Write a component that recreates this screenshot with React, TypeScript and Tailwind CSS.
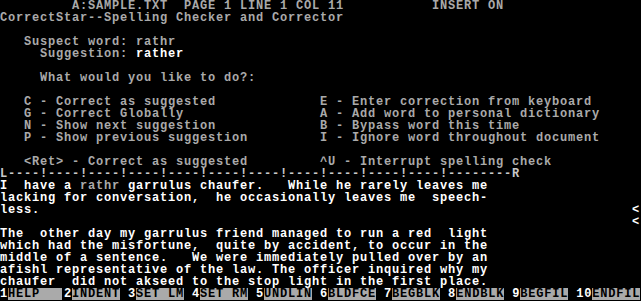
import type { ReactNode } from 'react'

// pantalla de texto de 80x25: cada celda mide 8x12 px
const GRIS = 'text-[#aaaaaa]'
const BLANCO = 'text-white'

function Fila({ children, className = '' }: { children?: ReactNode; className?: string }) {
  return <div className={`h-[12px] whitespace-pre ${className}`}>{children}</div>
}

// dos columnas de opciones, la derecha empieza en la columna 40
const OPCIONES = [
  ['   C - Correct as suggested', 'E - Enter correction from keyboard'],
  ['   G - Correct Globally', 'A - Add word to personal dictionary'],
  ['   N - Show next suggestion', 'B - Bypass word this time'],
  ['   P - Show previous suggestion', 'I - Ignore word throughout document'],
]

const TEXTO = [
  'lacking for conversation,  he occasionally leaves me  speech-',
  'less.',
  '',
  'The  other day my garrulus friend managed to run a red  light',
  'which had the misfortune,  quite by accident, to occur in the',
  'middle of a sentence.   We were immediately pulled over by an',
  'afishl representative of the law. The officer inquired why my',
  'chaufer  did not akseed to the stop light in the first place.',
]

const TECLAS = [
  { n: '1', label: 'HELP', ancho: 'w-[54px]', hueco: 'w-[2px]' },
  { n: '2', label: 'INDENT', ancho: 'w-[48px]', hueco: 'w-[8px]' },
  { n: '3', label: 'SET LM', ancho: 'w-[48px]', hueco: 'w-[8px]' },
  { n: '4', label: 'SET RM', ancho: 'w-[48px]', hueco: 'w-[8px]' },
  { n: '5', label: 'UNDLIN', ancho: 'w-[48px]', hueco: 'w-[8px]' },
  { n: '6', label: 'BLDFCE', ancho: 'w-[48px]', hueco: 'w-[8px]' },
  { n: '7', label: 'BEGBLK', ancho: 'w-[48px]', hueco: 'w-[8px]' },
  { n: '8', label: 'ENDBLK', ancho: 'w-[48px]', hueco: 'w-[8px]' },
  { n: '9', label: 'BEGFIL', ancho: 'w-[48px]', hueco: 'w-[8px]' },
  { n: '10', label: 'ENDFIL', ancho: 'w-[48px]', hueco: 'w-0' },
]

const REGLA = 'L' + '----!'.repeat(11) + '--------R'

export default function App() {
  return (
    <div className="h-[301px] w-[641px] overflow-hidden bg-black font-['Liberation_Mono',monospace] text-[12px] font-bold leading-[12px] tracking-[0.8px]">
      <Fila className={GRIS}>{'         A:SAMPLE.TXT  PAGE 1 LINE 1 COL 11           INSERT ON'}</Fila>
      <Fila className={GRIS}>CorrectStar--Spelling Checker and Corrector</Fila>
      <Fila />
      <Fila className={GRIS}>{'   Suspect word: rathr'}</Fila>
      <Fila className={GRIS}>
        {'     Suggestion: '}
        <span className={BLANCO}>rather</span>
      </Fila>
      <Fila />
      <Fila className={GRIS}>{'     What would you like to do?:'}</Fila>
      <Fila />
      {OPCIONES.map(([a, b]) => (
        <Fila key={a} className={`flex ${GRIS}`}>
          <span className="w-[320px]">{a}</span>
          <span>{b}</span>
        </Fila>
      ))}
      <Fila />
      <Fila className={`flex ${GRIS}`}>
        <span className="w-[320px]">{'   <Ret> - Correct as suggested'}</span>
        <span>^U - Interrupt spelling check</span>
      </Fila>
      <Fila className="text-[#c8c8c8]">{REGLA}</Fila>

      <div className={`relative ${BLANCO}`}>
        <Fila>
          {'I  have a '}
          <span className={GRIS}>rathr</span>
          {' garrulus chaufer.   While he rarely leaves me'}
        </Fila>
        {TEXTO.map((linea, i) => (
          <Fila key={i}>{linea}</Fila>
        ))}
        {/* marcas de fin de párrafo en el margen derecho */}
        <div className="absolute left-[632px] top-[24px] flex flex-col">
          <Fila>{'<'}</Fila>
          <Fila>{'<'}</Fila>
        </div>
      </div>

      <div className="flex h-[12px]">
        {TECLAS.map((k) => (
          <div key={k.n} className="flex">
            <span className="whitespace-pre text-white">{k.n}</span>
            <span className={`${k.ancho} whitespace-pre bg-[#aaaaaa] text-black`}>{k.label}</span>
            <span className={k.hueco} />
          </div>
        ))}
      </div>
    </div>
  )
}
